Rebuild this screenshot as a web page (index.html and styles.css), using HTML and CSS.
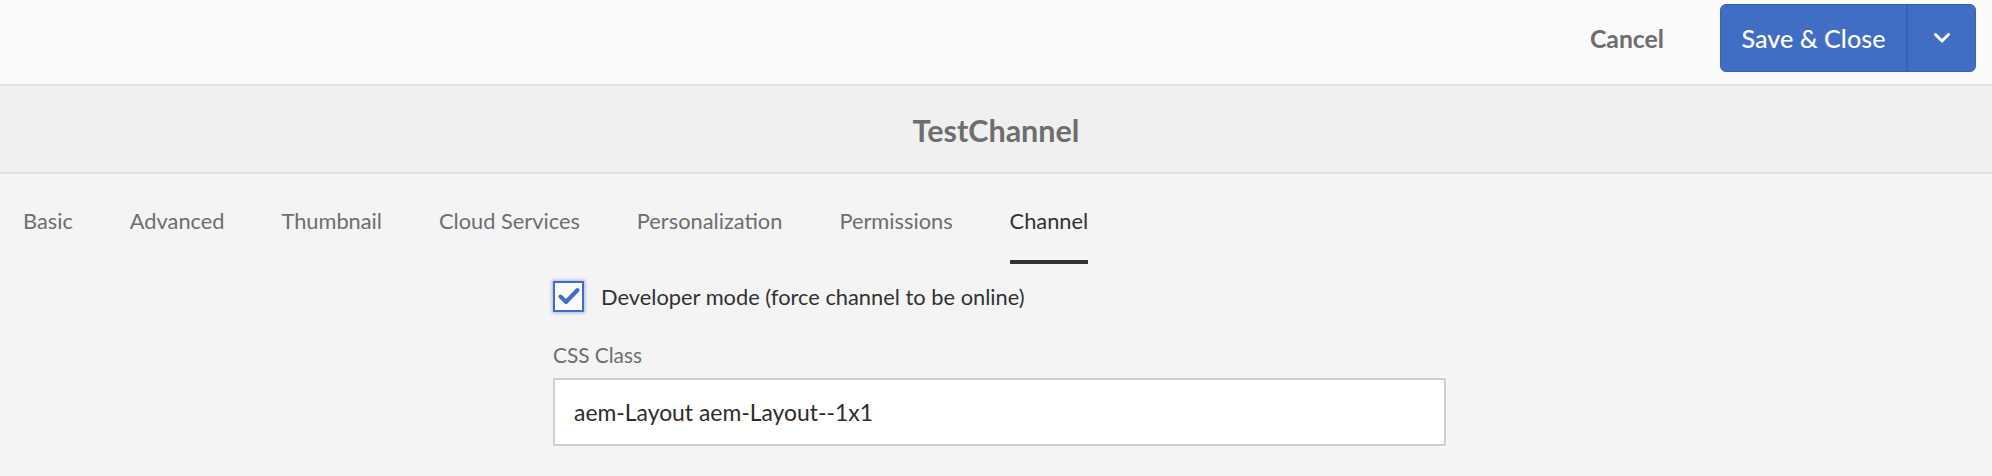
FILE: index.html
```html
<!DOCTYPE html>
<html lang="en">
<head>
<meta charset="utf-8">
<title>TestChannel</title>
<link rel="stylesheet" href="styles.css">
</head>
<body>
<header class="actionbar">
  <button class="btn-quiet" type="button">Cancel</button>
  <div class="split-btn">
    <button class="split-main" type="button">Save &amp; Close</button>
    <button class="split-toggle" type="button" aria-label="More">
      <svg width="16" height="10" viewBox="0 0 16 10"><path d="M1.5 1.5 L8 8 L14.5 1.5" fill="none" stroke="#fff" stroke-width="3" stroke-linecap="round" stroke-linejoin="round"/></svg>
    </button>
  </div>
</header>
<div class="titlebar"><h1 class="title">TestChannel</h1></div>
<nav class="tabs">
  <span class="tab">Basic</span>
  <span class="tab">Advanced</span>
  <span class="tab">Thumbnail</span>
  <span class="tab">Cloud Services</span>
  <span class="tab">Personalization</span>
  <span class="tab">Permissions</span>
  <span class="tab tab-active">Channel</span>
</nav>
<main class="form">
  <label class="check-row">
    <span class="checkbox">
      <svg width="24" height="20" viewBox="0 0 24 20"><path d="M3.5 10.5 L9 16 L20.5 4" fill="none" stroke="#416ec4" stroke-width="4" stroke-linecap="round" stroke-linejoin="round"/></svg>
    </span>
    <span class="check-label">Developer mode (force channel to be online)</span>
  </label>
  <div class="field">
    <div class="field-label">CSS Class</div>
    <div class="textbox">aem-Layout aem-Layout--1x1</div>
  </div>
</main>
</body>
</html>
```
FILE: styles.css
```css
* { box-sizing: border-box; }
html, body { margin: 0; padding: 0; }
body {
  background: #f4f4f4;
  font-family: Lato, "Open Sans", sans-serif;
  width: 1992px;
  height: 476px;
  overflow: hidden;
}
.actionbar {
  height: 86px;
  background: #fafafa;
  border-bottom: 2px solid #e1e1e1;
  display: flex;
  justify-content: flex-end;
  align-items: flex-start;
  padding: 4px 16px 0 0;
}
.btn-quiet {
  background: none;
  border: 0;
  font-family: inherit;
  font-size: 24.8px;
  font-weight: 700;
  color: #6e6e6e;
  height: 68px;
  padding: 0;
  margin-right: 56px;
}
.split-btn {
  display: flex;
  height: 68px;
  background: #416ec4;
  border: 1px solid #3a64b6;
  border-radius: 6px;
  overflow: hidden;
}
.split-main {
  background: none;
  border: 0;
  border-right: 2px solid #3862b0;
  color: #fff;
  font-family: inherit;
  font-size: 25.2px;
  font-weight: 500;
  width: 187px;
  padding: 0;
}
.split-toggle {
  background: none;
  border: 0;
  width: 67px;
  display: flex;
  align-items: center;
  justify-content: center;
  padding: 0;
}
.titlebar {
  height: 88px;
  background: #f0f0f0;
  border-bottom: 2px solid #e1e1e1;
  display: flex;
  align-items: center;
  justify-content: center;
}
.title {
  margin: 0;
  font-size: 30.5px;
  font-weight: 700;
  color: #6e6e6e;
  line-height: 36px;
  padding-top: 2px;
}
.tabs {
  display: flex;
  gap: 57px;
  padding-left: 23px;
}
.tab {
  font-size: 21.8px;
  line-height: 26px;
  color: #6e6e6e;
  padding: 34px 0 26px;
  border-bottom: 4px solid transparent;
}
.tab-active {
  color: #323232;
  border-bottom-color: #323232;
}
.form {
  margin-left: 553px;
  width: 893px;
  padding-top: 16px;
}
.check-row {
  display: flex;
  align-items: center;
  gap: 17px;
  height: 32px;
}
.checkbox {
  width: 31px;
  height: 31px;
  border: 2px solid #416ec4;
  background: #fafafa;
  box-shadow: 0 0 3px 1px rgba(65, 110, 196, 0.45);
  display: flex;
  align-items: center;
  justify-content: center;
}
.check-label {
  font-size: 21.85px;
  color: #323232;
}
.field { margin-top: 30px; }
.field-label {
  font-size: 20.8px;
  line-height: 26px;
  color: #6e6e6e;
}
.textbox {
  margin-top: 10px;
  height: 68px;
  background: #fff;
  border: 2px solid #d0d0d0;
  padding-left: 19px;
  display: flex;
  align-items: center;
  font-size: 22.9px;
  color: #2c2c2c;
}
```
